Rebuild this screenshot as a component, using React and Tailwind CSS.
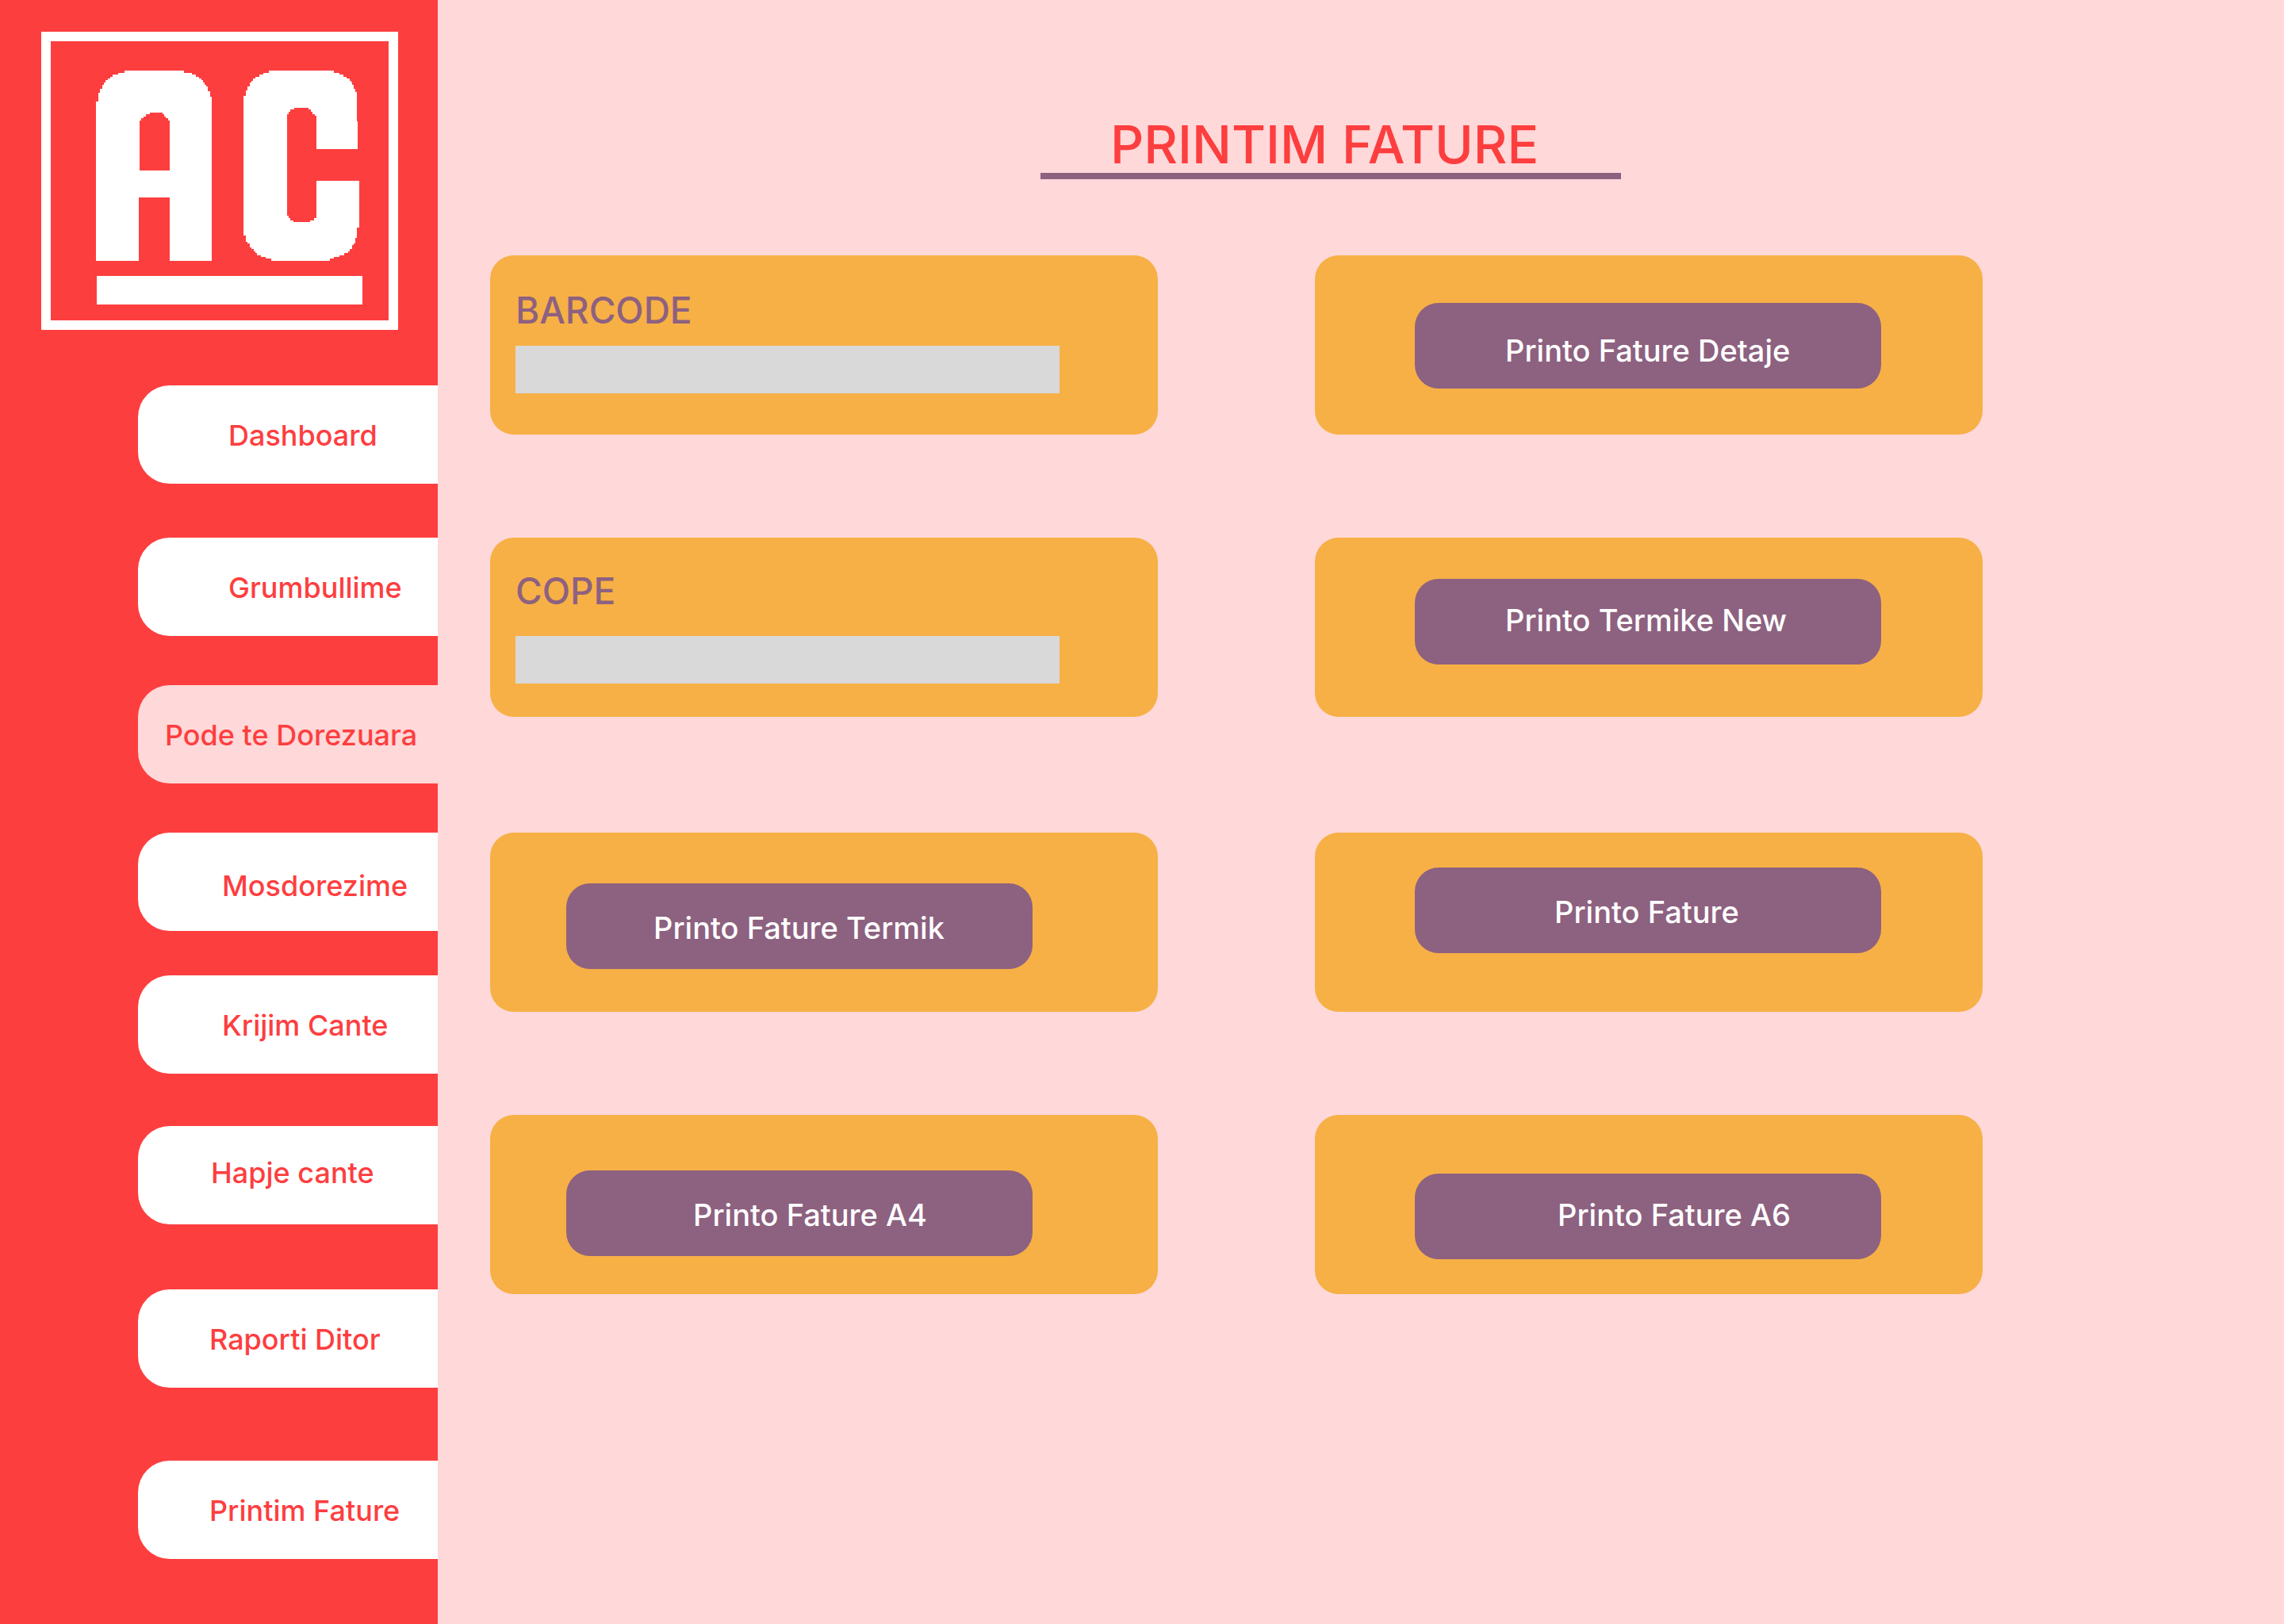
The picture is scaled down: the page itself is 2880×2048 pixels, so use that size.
const navItems = [
  { label: "Dashboard", box: "mt-[70px] pl-[114px] pt-10" },
  { label: "Grumbullime", box: "mt-[68px] pl-[114px] pt-10" },
  { label: "Pode te Dorezuara", box: "mt-[62px] pl-[34px] pt-10", active: true },
  { label: "Mosdorezime", box: "mt-[62px] pl-[106px] pt-11" },
  { label: "Krijim Cante", box: "mt-[56px] pl-[106px] pt-10" },
  { label: "Hapje cante", box: "mt-[66px] pl-[92px] pt-9" },
  { label: "Raporti Ditor", box: "mt-[82px] pl-[90px] pt-10" },
  { label: "Printim Fature", box: "mt-[92px] pl-[90px] pt-10" },
];

// Each row is [top, left, right]; a row runs down to the top of the next one.
const letterA = [
  [28, 125, 350], [37, 101, 380], [43, 80, 396], [50, 71, 408], [57, 62, 416],
  [64, 55, 422], [72, 49, 428], [80, 43, 434], [88, 43, 440], [95, 34, 440],
  [105, 34, 449], [110, 28, 449], [127, 28, 455], [145, 19, 455],
];
const letterAHole = [
  [187, 221, 269], [193, 207, 275], [200, 199, 283], [208, 190, 292], [217, 182, 298],
];
const letterALegs = [[508, 179, 296]];
const letterC = [
  [27, 117, 363], [36, 96, 384], [42, 81, 399], [51, 66, 411], [57, 57, 422],
  [66, 51, 428], [72, 45, 432], [80, 45, 438], [87, 36, 438], [95, 36, 444],
  [102, 30, 444], [108, 30, 450], [123, 21, 451], [220, 21, 453], [444, 21, 459],
  [620, 21, 450], [651, 30, 450], [660, 30, 444], [675, 36, 444], [681, 45, 438],
  [687, 45, 432], [696, 51, 432], [702, 60, 423], [711, 66, 416], [717, 72, 402],
  [726, 87, 384], [732, 105, 363], [738, 126, 348],
];
const letterCHole = [
  [168, 213, 267], [174, 198, 276], [183, 192, 282], [192, 186, 291], [198, 185, 297],
  [576, 192, 297], [585, 198, 288], [594, 210, 273],
];
const letterCMouth = [[324, 296, 462]];

function Steps({ rows, bottom, className }) {
  return rows.map(([top, left, right], i) => (
    <rect
      key={top}
      className={className}
      x={left}
      y={top}
      width={right - left}
      height={(i + 1 < rows.length ? rows[i + 1][0] : bottom) - top}
    />
  ));
}

function Logo() {
  return (
    <svg
      role="img"
      aria-label="AC"
      viewBox="0 0 450 376"
      shapeRendering="crispEdges"
      className="ml-[52px] h-[376px] w-[450px] fill-white"
    >
      <rect width="450" height="376" />
      <rect x="12" y="12" width="426" height="352" className="fill-[#fd3e3f]" />
      <g transform="translate(63 40) scale(0.33333)">
        <Steps rows={letterA} bottom={746} />
        <Steps rows={letterAHole} bottom={405} className="fill-[#fd3e3f]" />
        <Steps rows={letterALegs} bottom={748} className="fill-[#fd3e3f]" />
      </g>
      <g transform="translate(248 40) scale(0.33333)">
        <Steps rows={letterC} bottom={747} />
        <Steps rows={letterCHole} bottom={600} className="fill-[#fd3e3f]" />
        <Steps rows={letterCMouth} bottom={444} className="fill-[#fd3e3f]" />
      </g>
      <rect x="70" y="308" width="335" height="36" />
    </svg>
  );
}

function Sidebar() {
  return (
    <aside className="flex w-[552px] shrink-0 flex-col bg-[#fd3e3f] pt-10 pb-20">
      <Logo />
      <nav className="flex flex-col pl-[174px]">
        {navItems.map(({ label, box, active }) => (
          <a
            key={label}
            href="#"
            className={`h-[124px] rounded-l-[40px] text-[36px] leading-[46px] whitespace-nowrap ${active ? "bg-[#ffd8d9]" : "bg-white"} ${box}`}
          >
            {label}
          </a>
        ))}
      </nav>
    </aside>
  );
}

function Card({ children, className }) {
  return (
    <div className={`flex h-[226px] flex-col items-start rounded-[30px] bg-[#f7b046] ${className}`}>
      {children}
    </div>
  );
}

function Field({ id, label, card, gap }) {
  return (
    <Card className={`pl-8 ${card}`}>
      <label htmlFor={id} className="text-[46px] leading-[58px] text-[#8d6180]">
        {label}
      </label>
      <input id={id} type="text" className={`h-[60px] w-[686px] max-w-full bg-[#d9d9d9] px-4 text-[36px] text-[#8d6180] ${gap}`} />
    </Card>
  );
}

function Action({ label, card, text }) {
  return (
    <Card className={card}>
      <button
        type="button"
        className={`flex h-[108px] w-[588px] max-w-full items-start rounded-[30px] bg-[#8d6180] text-left text-[38px] leading-[48px] whitespace-nowrap text-white ${text}`}
      >
        {label}
      </button>
    </Card>
  );
}

export default function App() {
  return (
    <div className="flex min-h-screen bg-[#ffd8d9] font-['Inter',sans-serif] font-medium text-[#fd3e3f]">
      <Sidebar />
      <main className="min-w-0 flex-1">
        <header className="flex justify-center pt-[146px] pr-[76px]">
          <h1 className="w-[732px] border-b-8 border-[#8d6180] pl-[88px] text-[66px] leading-[72px] whitespace-nowrap">
            PRINTIM FATURE
          </h1>
        </header>
        <section className="mt-24 grid grid-cols-2 gap-x-[198px] gap-y-[130px] pr-[380px] pl-[66px]">
          <Field id="barcode" label="BARCODE" card="pt-10" gap="mt-4" />
          <Action label="Printo Fature Detaje" card="pt-[60px] pl-[126px]" text="pt-9 pl-[114px]" />
          <Field id="cope" label="COPE" card="pt-[38px]" gap="mt-7" />
          <Action label="Printo Termike New" card="pt-[52px] pl-[126px]" text="pt-7 pl-[114px]" />
        </section>
        <section className="mt-[146px] grid grid-cols-2 gap-x-[198px] gap-y-[130px] pr-[380px] pl-[66px]">
          <Action label="Printo Fature Termik" card="pt-[64px] pl-24" text="pt-8 pl-[110px]" />
          <Action label="Printo Fature" card="pt-[44px] pl-[126px]" text="pt-8 pl-[176px]" />
          <Action label="Printo Fature A4" card="pt-[70px] pl-24" text="pt-8 pl-[160px]" />
          <Action label="Printo Fature A6" card="pt-[74px] pl-[126px]" text="pt-7 pl-[180px]" />
        </section>
      </main>
    </div>
  );
}
